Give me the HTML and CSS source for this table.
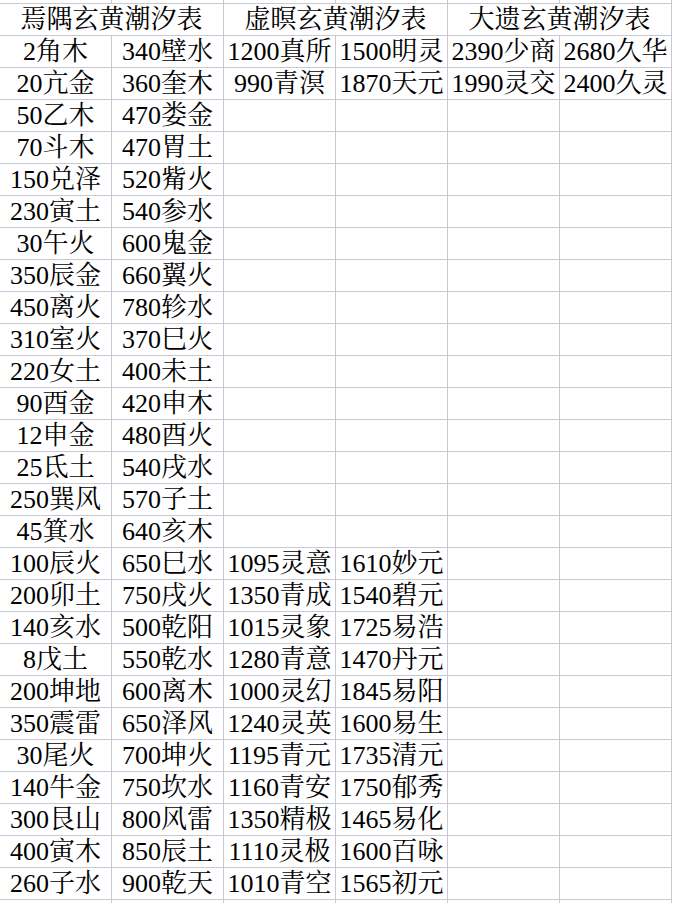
FILE: index.html
```html
<!DOCTYPE html>
<html lang="zh-CN">
<head>
<meta charset="utf-8">
<title>玄黄潮汐表</title>
<link rel="stylesheet" href="styles.css">
</head>
<body>
<div class="sheet">
<table class="grid">
<colgroup><col class="c"><col class="c"><col class="c"><col class="c"><col class="c"><col class="c"></colgroup>
<tbody>
<tr class="edge"><td></td><td></td><td></td><td></td><td></td><td></td></tr>
<tr><td colspan="2">焉隅玄黄潮汐表</td><td colspan="2">虚暝玄黄潮汐表</td><td colspan="2">大遗玄黄潮汐表</td></tr>
<tr><td>2角木</td><td>340壁水</td><td>1200真所</td><td>1500明灵</td><td>2390少商</td><td>2680久华</td></tr>
<tr><td>20亢金</td><td>360奎木</td><td>990青溟</td><td>1870天元</td><td>1990灵交</td><td>2400久灵</td></tr>
<tr><td>50乙木</td><td>470娄金</td><td></td><td></td><td></td><td></td></tr>
<tr><td>70斗木</td><td>470胃土</td><td></td><td></td><td></td><td></td></tr>
<tr><td>150兑泽</td><td>520觜火</td><td></td><td></td><td></td><td></td></tr>
<tr><td>230寅土</td><td>540参水</td><td></td><td></td><td></td><td></td></tr>
<tr><td>30午火</td><td>600鬼金</td><td></td><td></td><td></td><td></td></tr>
<tr><td>350辰金</td><td>660翼火</td><td></td><td></td><td></td><td></td></tr>
<tr><td>450离火</td><td>780轸水</td><td></td><td></td><td></td><td></td></tr>
<tr><td>310室火</td><td>370巳火</td><td></td><td></td><td></td><td></td></tr>
<tr><td>220女土</td><td>400未土</td><td></td><td></td><td></td><td></td></tr>
<tr><td>90酉金</td><td>420申木</td><td></td><td></td><td></td><td></td></tr>
<tr><td>12申金</td><td>480酉火</td><td></td><td></td><td></td><td></td></tr>
<tr><td>25氐土</td><td>540戌水</td><td></td><td></td><td></td><td></td></tr>
<tr><td>250巽风</td><td>570子土</td><td></td><td></td><td></td><td></td></tr>
<tr><td>45箕水</td><td>640亥木</td><td></td><td></td><td></td><td></td></tr>
<tr><td>100辰火</td><td>650巳水</td><td>1095灵意</td><td>1610妙元</td><td></td><td></td></tr>
<tr><td>200卯土</td><td>750戌火</td><td>1350青成</td><td>1540碧元</td><td></td><td></td></tr>
<tr><td>140亥水</td><td>500乾阳</td><td>1015灵象</td><td>1725易浩</td><td></td><td></td></tr>
<tr><td>8戊土</td><td>550乾水</td><td>1280青意</td><td>1470丹元</td><td></td><td></td></tr>
<tr><td>200坤地</td><td>600离木</td><td>1000灵幻</td><td>1845易阳</td><td></td><td></td></tr>
<tr><td>350震雷</td><td>650泽风</td><td>1240灵英</td><td>1600易生</td><td></td><td></td></tr>
<tr><td>30尾火</td><td>700坤火</td><td>1195青元</td><td>1735清元</td><td></td><td></td></tr>
<tr><td>140牛金</td><td>750坎水</td><td>1160青安</td><td>1750郁秀</td><td></td><td></td></tr>
<tr><td>300艮山</td><td>800风雷</td><td>1350精极</td><td>1465易化</td><td></td><td></td></tr>
<tr><td>400寅木</td><td>850辰土</td><td>1110灵极</td><td>1600百咏</td><td></td><td></td></tr>
<tr><td>260子水</td><td>900乾天</td><td>1010青空</td><td>1565初元</td><td></td><td></td></tr>
<tr class="edge"><td></td><td></td><td></td><td></td><td></td><td></td></tr>
</tbody>
</table>
</div>
</body>
</html>
```
FILE: styles.css
```css
html, body {
  margin: 0;
  padding: 0;
  background: #ffffff;
  width: 676px;
  height: 903px;
  overflow: hidden;
}
.sheet {
  margin-top: -28px;
}
.grid {
  border-collapse: separate;
  border-spacing: 0;
  table-layout: fixed;
  width: 672px;
  font-family: "Liberation Serif", "Noto Serif CJK SC", "Noto Sans CJK SC", serif;
  font-size: 26px;
  color: #000000;
}
.grid .c {
  width: 112px;
}
.grid td {
  height: 31px;
  padding: 0;
  border-right: 1px solid #c9c9d6;
  border-bottom: 1px solid #c9c9d6;
  text-align: center;
  vertical-align: middle;
  white-space: nowrap;
  overflow: hidden;
  line-height: 31px;
  box-sizing: content-box;
}
```
